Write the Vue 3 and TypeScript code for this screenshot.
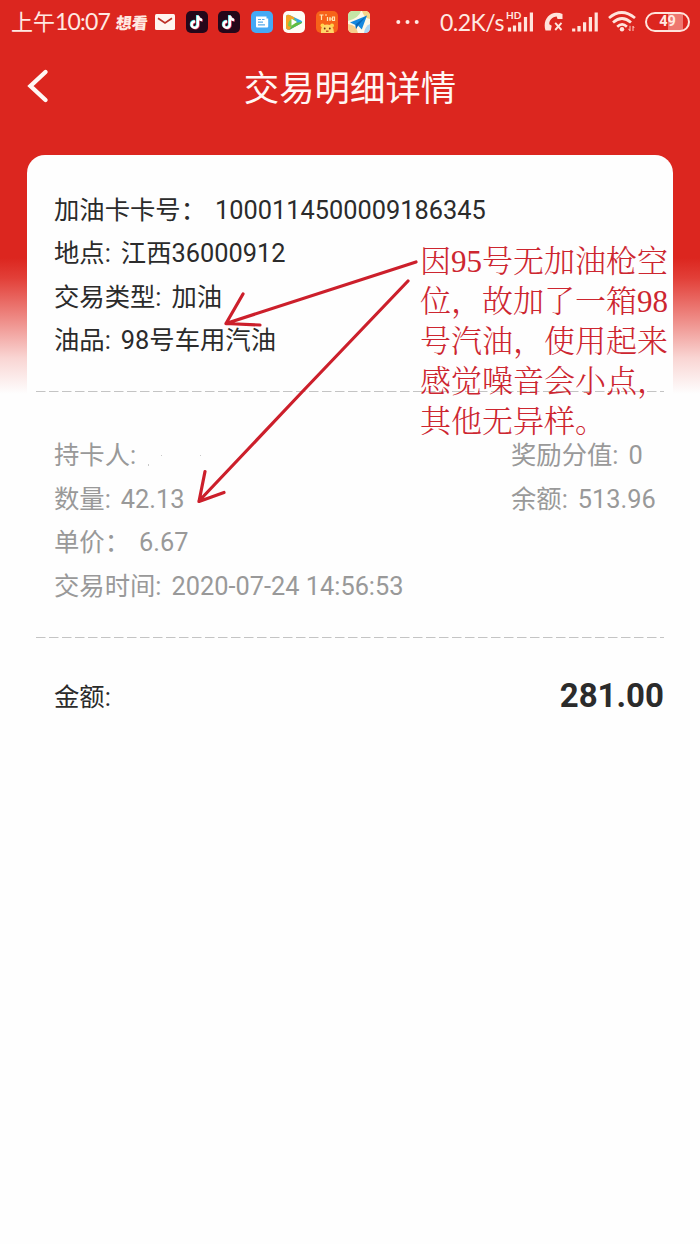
<script setup lang="ts">
interface Field {
  label: string
  value: string
  wide?: boolean
}

const primary: Field[] = [
  { label: '加油卡卡号：', value: '1000114500009186345', wide: true },
  { label: '地点:', value: '江西36000912' },
  { label: '交易类型:', value: '加油' },
  { label: '油品:', value: '98号车用汽油' },
]

const secondary: Field[] = [
  { label: '持卡人:', value: '' },
  { label: '数量:', value: '42.13' },
  { label: '单价：', value: '6.67', wide: true },
  { label: '交易时间:', value: '2020-07-24 14:56:53' },
]

const balances: Field[] = [
  { label: '奖励分值:', value: '0' },
  { label: '余额:', value: '513.96' },
]

const note: string[] = [
  '因95号无加油枪空',
  '位，故加了一箱98',
  '号汽油，使用起来',
  '感觉噪音会小点，',
  '其他无异样。',
]
</script>

<template>
  <main class="screen">
    <div class="status">
      <span class="time">上午<span class="clock">10:07</span></span>
      <span class="brand">想看</span>
      <svg class="mail" width="20" height="16" viewBox="0 0 20 16">
        <rect width="20" height="16" rx="1.5" fill="#fff5f0" />
        <path d="M3 4.2 10 9l7-4.8" fill="none" stroke="#bd3027" stroke-width="1.7" />
      </svg>
      <svg v-for="n in 2" :key="n" width="22" height="22" viewBox="0 0 22 22">
        <rect width="22" height="22" rx="5" fill="#25071a" />
        <g fill="none" stroke-width="2.5">
          <path d="M11.2 4v9.2a3.1 3.1 0 1 1-2.8-3.1M11.2 4.3c.5 2.8 2 4 4.3 4.1" stroke="#35d8dc" />
          <path d="M12.5 5v9.2a3.1 3.1 0 1 1-2.8-3.1M12.5 5.3c.5 2.8 2 4 4.3 4.1" stroke="#e94768" />
          <path d="M11.8 4.5v9.2A3.1 3.1 0 1 1 9 10.6M11.8 4.8c.5 2.8 2 4 4.3 4.1" stroke="#fff" />
        </g>
      </svg>
      <svg width="22" height="22" viewBox="0 0 22 22">
        <rect width="22" height="22" rx="5" fill="#45a9f5" />
        <path d="M5 5.4h10.5v2h1.7v8.2a1 1 0 0 1-1 1H6a1 1 0 0 1-1-1z" fill="#fff" />
        <path d="M7 8.5h3M11 8.5h2.5M7 11.2h5M7 13.8h7" stroke="#57a9e9" stroke-width="1.2" />
      </svg>
      <svg width="22" height="22" viewBox="0 0 22 22">
        <rect width="22" height="22" rx="5" fill="#fffdf5" />
        <path d="M3 6Q3 2.800 6.500 4L18 9.500q2.400 1.500 0 3L7 18.500q-4 1-4-2.500z" fill="#36a9e1" />
        <path d="M3 14V6q0-3 3.500-2l5 2.400L7 18.500Q3 19.500 3 16" fill="#f5a424" />
        <path d="M6.500 18.700 11 12l8-1q0 1-1 1.500L7 18.500z" fill="#61bd3e" />
        <path d="M5 15q0-8 7-7l2 3-6 5z" fill="#7cc84a" />
        <path d="m8.500 7.800 5.500 3.200-5.500 3.400z" fill="#fff" />
      </svg>
      <svg width="22" height="22" viewBox="0 0 22 22">
        <rect width="22" height="22" rx="5" fill="#f76319" />
        <path d="M3.500 4h4M5.500 4v5M9 4h2M11.500 6v4M14 6v4M16.500 6h2v3.500h-2zM13 8h3" fill="none" stroke="#ffe4b5" stroke-width="1.2" />
        <circle cx="6.500" cy="14.500" r="2" fill="#ffd34a" />
        <circle cx="16" cy="14.500" r="2" fill="#ffd34a" />
        <path d="M5 22q-1-8.500 6-8.500t7 8.500z" fill="#ffd668" />
        <circle cx="8.700" cy="17.500" r=".9" fill="#6d3215" />
        <circle cx="13.800" cy="17.500" r=".9" fill="#6d3215" />
        <path d="M10 20.200h2.500" stroke="#c93b20" stroke-width="1.3" />
      </svg>
      <svg width="22" height="22" viewBox="0 0 22 22">
        <rect width="22" height="22" rx="5" fill="#fff8e7" />
        <path d="M0 10V5q0-5 5-5h8q-2 7-13 10" fill="#c5e6a7" />
        <path d="M14 0h3q5 0 5 5v3q-6-1-8-8" fill="#f5d48a" />
        <path d="M0 13q9 1 10 9H5q-5 0-5-5" fill="#f6cf8c" />
        <path d="M22 13q-5 2-6 9h1q5 0 5-5" fill="#abd6f4" />
        <path d="m2 11.500 17-7-5.200 14-3.800-4-2 3.500-.5-4z" fill="#1588df" />
        <path d="m7.500 13.500 11.500-9-9 10-2 3.500z" fill="#0866b5" />
      </svg>
      <svg class="more" width="24" height="6" viewBox="0 0 24 6">
        <g fill="#ffe9e2">
          <circle cx="2.300" cy="3" r="2" />
          <circle cx="11.500" cy="3" r="2" />
          <circle cx="20.700" cy="3" r="2" />
        </g>
      </svg>
      <span class="speed">0.2K/s</span>
      <div class="hd">
        <span class="hd-label">HD</span>
        <svg width="27" height="20" viewBox="0 0 27 20">
          <path d="M2.500 19.500v-4M7.500 19.500v-6M12.700 19.500v-9.300M18.500 19.500V5M24.400 19.500V.5" stroke="#ffe4dc" stroke-width="3.2" />
        </svg>
      </div>
      <svg width="20" height="20" viewBox="0 0 20 20">
        <path d="M1.500 18.500C-1.500 9.500 4 .8 12.500.8q3.500 0 6 1.200V7h-5l-.8-2.600C8 4.800 5 8.500 5.300 12.300l2.400 1.500-.9 4.700z" fill="#ffe4dc" />
        <path d="m11.200 10.800 6.300 7.200m0-7.200L11.200 18" stroke="#ffe4dc" stroke-width="1.900" />
      </svg>
      <svg width="27" height="20" viewBox="0 0 27 20">
        <path d="M1.700 19.500v-3M7 19.500v-5.600M12.600 19.500v-9.300M18.400 19.500V5M24.200 19.500V.5" stroke="#ffe4dc" stroke-width="3.2" />
      </svg>
      <svg width="29" height="21" viewBox="0 0 29 21">
        <g fill="none" stroke="#ffe4dc" stroke-width="2.700">
          <path d="M1 7q12.500-11 26 0M5 11.500q9-8 18 0M9.200 15.700q5-4.500 9.700 0" />
        </g>
        <circle cx="14" cy="18.200" r="2.200" fill="#ffe4dc" />
        <path d="M22 14.800v5M20.500 17.800l1.500 2M25 20v-4.800l1.200 1.800" fill="none" stroke="#ffc9bf" stroke-width="1" />
      </svg>
      <div class="battery"><span>49</span></div>
    </div>

    <header class="nav">
      <svg class="back" width="24" height="36" viewBox="0 0 24 36">
        <path d="M19.500 4 4.500 18l15 14" fill="none" stroke="#fff7f4" stroke-width="4.400" stroke-linecap="round" stroke-linejoin="miter" />
      </svg>
      <h1>交易明细详情</h1>
    </header>

    <section class="card">
      <div class="primary">
        <p v-for="f in primary" :key="f.label" class="row" :class="{ wide: f.wide }">
          <span>{{ f.label }}</span><span class="value">{{ f.value }}</span>
        </p>
      </div>
      <div class="rule" />
      <div class="secondary">
        <div class="details">
          <p v-for="f in secondary" :key="f.label" class="row" :class="{ wide: f.wide }">
            <span>{{ f.label }}</span><span class="value">{{ f.value }}</span>
          </p>
        </div>
        <div class="balances">
          <p v-for="f in balances" :key="f.label" class="row">
            <span>{{ f.label }}</span><span class="value">{{ f.value }}</span>
          </p>
        </div>
      </div>
      <div class="rule" />
      <div class="total">
        <span>金额:</span>
        <strong>281.00</strong>
      </div>
    </section>

    <svg class="arrows" width="700" height="540" viewBox="0 0 700 540">
      <g fill="none" stroke="#cc1f2b" stroke-width="3.200" stroke-linecap="round" stroke-linejoin="round">
        <path d="M416 262 226 323.500M243 294l-17 29.500 34 1.500" />
        <path d="M408 281 303 391 199 501M205 471.500l-6 30 25-9" />
      </g>
      <g fill="#c9c9c9">
        <rect x="148" y="464" width="1" height="2" />
        <rect x="161" y="455" width="1" height="1" />
        <rect x="200" y="455" width="1" height="1" />
      </g>
    </svg>
    <div class="note">
      <div v-for="line in note" :key="line">{{ line }}</div>
    </div>
  </main>
</template>

<style>
body {
  background: #fefefe;
}
</style>

<style scoped>
.screen {
  position: relative;
  box-sizing: border-box;
  width: 700px;
  height: 1244px;
  overflow: hidden;
  background: linear-gradient(#dc261f 0, #dc261f 258px, #e23f38 278px, #ee8984 318px, #f9d5d3 358px, #fefefe 394px);
  font-family: Roboto, "Noto Sans CJK SC", sans-serif;
  color: #2b2b2b;
}
.status {
  display: grid;
  grid-template-columns: 105px 39px 31px 32px 33px 32px 33px 32px 48px 44px 67px 37px 28px 36px 37px 46px;
  align-items: center;
  height: 42px;
  padding-left: 11px;
  color: #ffe9e2;
}
.status svg {
  display: block;
}
.time {
  font: 400 22px/42px Lato, "Noto Sans CJK SC", sans-serif;
  white-space: nowrap;
}
.clock {
  font-size: 23px;
  letter-spacing: -0.800px;
}
.brand {
  font: 900 16px/42px "Noto Sans CJK SC", sans-serif;
  transform: skewX(-6deg);
}
.speed {
  font: 400 23px/42px Lato, sans-serif;
  letter-spacing: -0.500px;
  white-space: nowrap;
}
.hd {
  position: relative;
}
.hd-label {
  position: absolute;
  left: -1px;
  top: -2px;
  font: 700 10px/10px Lato, sans-serif;
}
.battery {
  box-sizing: border-box;
  width: 45px;
  height: 20px;
  border: 2px solid #ffe4dc;
  border-radius: 10px;
  background: linear-gradient(90deg, #dc261f 50%, #ee7770 50%, #ee7770 88%, #dc261f 88%);
  font: 700 14.500px/16px Roboto, sans-serif;
  text-align: center;
}
.nav {
  display: grid;
  grid-template-columns: 100px 500px 100px;
  align-items: center;
  height: 113px;
}
.back {
  margin: -25px 0 0 26px;
}
h1 {
  margin: -26px 0 0;
  font: 400 35.400px/50px "Noto Sans CJK SC", sans-serif;
  text-align: center;
  color: #fff7f4;
}
.card {
  box-sizing: border-box;
  width: 646px;
  height: 1089px;
  margin-left: 27px;
  padding-top: 33px;
  border-radius: 18px 18px 0 0;
  background: #fefefe;
  font-weight: 400;
  font-size: 25.350px;
}
.primary {
  box-sizing: border-box;
  height: 203px;
  padding: 0.600px 0 0 27px;
}
.row {
  display: flex;
  gap: 10px;
  height: 43.500px;
  margin: 0;
  line-height: 43.500px;
  white-space: nowrap;
}
.row.wide {
  gap: 9px;
}
.rule {
  width: 628px;
  height: 1px;
  margin-left: 9px;
  background: repeating-linear-gradient(90deg, #c4c4c4 0, #c4c4c4 9px, #fefefe 10px, #fefefe 13px);
}
.secondary {
  display: flex;
  box-sizing: border-box;
  height: 245px;
  padding: 42px 0 0 27px;
  color: #999;
}
.details {
  width: 457px;
}
.total {
  display: flex;
  justify-content: space-between;
  align-items: center;
  height: 60px;
  padding: 27px 9px 0 27px;
}
.total strong {
  font-size: 33px;
}
.arrows {
  position: absolute;
  left: 0;
  top: 0;
}
.note {
  position: absolute;
  left: 420px;
  top: 242px;
  font: 300 31px/40px "Liberation Serif", "Noto Serif CJK SC", "Noto Sans CJK SC", serif;
  color: #cd2630;
  white-space: nowrap;
}
</style>
